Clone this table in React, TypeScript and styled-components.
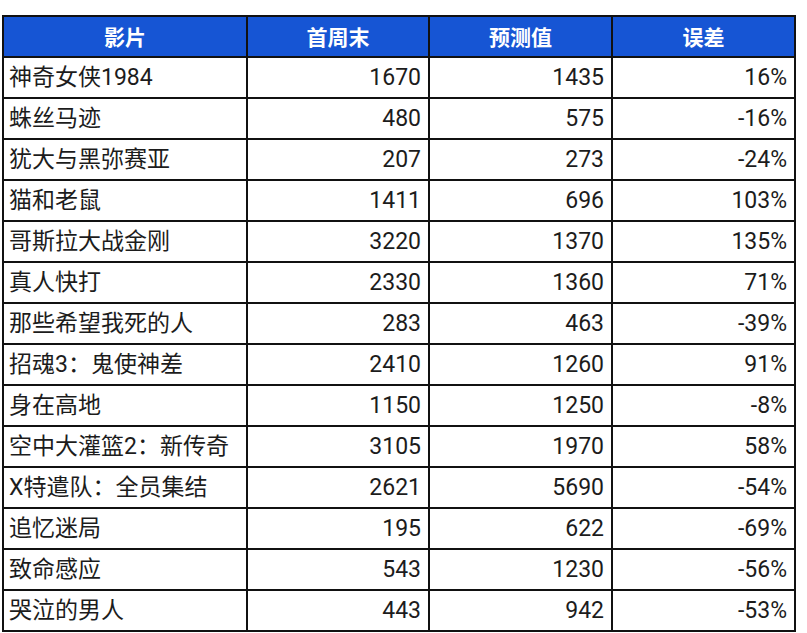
import React from "react";
import styled, { createGlobalStyle } from "styled-components";

const GlobalStyle = createGlobalStyle`
  html, body {
    margin: 0;
    padding: 0;
    background: #ffffff;
  }
  body {
    font-family: Roboto, "Noto Sans CJK SC", sans-serif;
  }
`;

const Page = styled.div`
  padding: 15px 0 0 2px;
`;

const Table = styled.table`
  border-collapse: collapse;
  table-layout: fixed;
  font-size: 23px;
  color: #1c1c1c;
`;

const Head = styled.th<{ $w: number }>`
  width: ${(p) => p.$w}px;
  height: 39px;
  padding: 0;
  background: #1655d4;
  color: #ffffff;
  font-family: "Noto Sans CJK SC", sans-serif;
  font-weight: 700;
  font-size: 21px;
  text-align: center;
  border: 2px solid #111;
  line-height: 1;
`;

const Cell = styled.td<{ $num?: boolean }>`
  height: 39px;
  padding: 0 ${(p) => (p.$num ? "7px" : "5px")};
  text-align: ${(p) => (p.$num ? "right" : "left")};
  border: 2px solid #111;
  white-space: nowrap;
  line-height: 1;
`;

const rows: [string, number, number, string][] = [
  ["神奇女侠1984", 1670, 1435, "16%"],
  ["蛛丝马迹", 480, 575, "-16%"],
  ["犹大与黑弥赛亚", 207, 273, "-24%"],
  ["猫和老鼠", 1411, 696, "103%"],
  ["哥斯拉大战金刚", 3220, 1370, "135%"],
  ["真人快打", 2330, 1360, "71%"],
  ["那些希望我死的人", 283, 463, "-39%"],
  ["招魂3：鬼使神差", 2410, 1260, "91%"],
  ["身在高地", 1150, 1250, "-8%"],
  ["空中大灌篮2：新传奇", 3105, 1970, "58%"],
  ["X特遣队：全员集结", 2621, 5690, "-54%"],
  ["追忆迷局", 195, 622, "-69%"],
  ["致命感应", 543, 1230, "-56%"],
  ["哭泣的男人", 443, 942, "-53%"],
];

export default function App() {
  return (
    <Page>
      <GlobalStyle />
      <Table>
        <thead>
          <tr>
            <Head $w={242}>影片</Head>
            <Head $w={180}>首周末</Head>
            <Head $w={181}>预测值</Head>
            <Head $w={181}>误差</Head>
          </tr>
        </thead>
        <tbody>
          {rows.map((r) => (
            <tr key={r[0]}>
              <Cell>{r[0]}</Cell>
              <Cell $num>{r[1]}</Cell>
              <Cell $num>{r[2]}</Cell>
              <Cell $num>{r[3]}</Cell>
            </tr>
          ))}
        </tbody>
      </Table>
    </Page>
  );
}
